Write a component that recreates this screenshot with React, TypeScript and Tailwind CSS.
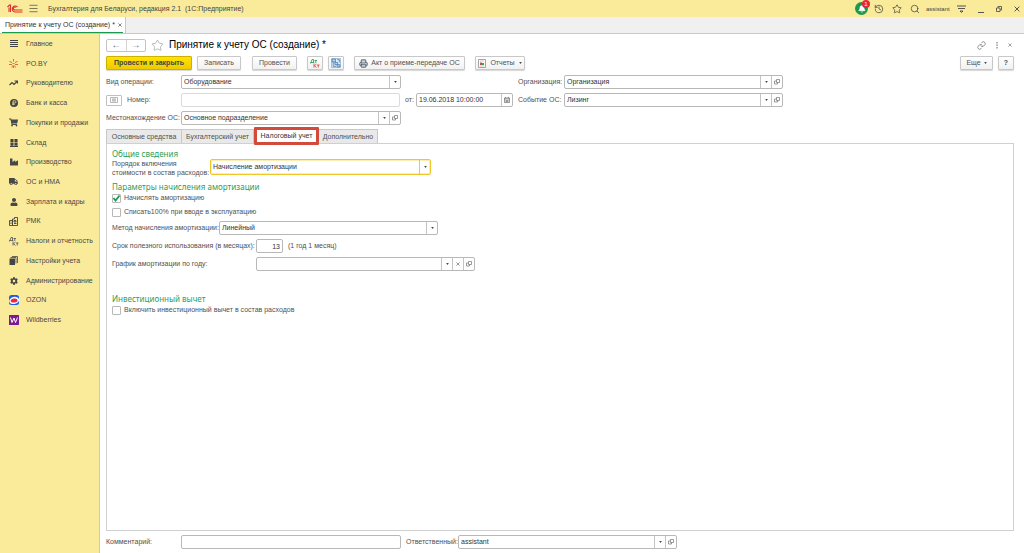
import { useState } from 'react'
import type { ReactNode } from 'react'
import { FaCog, FaIndustry, FaShoppingCart, FaTruck, FaUser } from 'react-icons/fa'
import { Bell, History, Link, Menu, Printer, Search, Star } from 'lucide-react'

const CELL =
  'flex w-[11px] shrink-0 items-center justify-center border-l border-[#c4c4c4] text-[#555]'
const BUTTON =
  'flex h-[14px] items-center justify-center rounded-[1px] border border-[#c8c8c8] bg-linear-to-b from-white to-[#f1f1f1] text-[#505050] shadow-[0_1px_1px_#d8d8d8]'

function Caret() {
  return (
    <svg viewBox="0 0 4 3" className="h-[2px] w-[3px]" aria-hidden="true">
      <path d="M0 0h4L2 3z" fill="#444" />
    </svg>
  )
}

function OpenIcon() {
  return (
    <svg viewBox="0 0 12 12" className="size-[6px]" fill="none" stroke="#666" strokeWidth="1.3" aria-hidden="true">
      <path d="M5 1h6v6H5zM5 4H1v6h6V7" />
    </svg>
  )
}

function CrossIcon({ className }: { className: string }) {
  return (
    <svg viewBox="0 0 10 10" className={className} fill="none" stroke="currentColor" strokeWidth="1.5" aria-hidden="true">
      <path d="M1 1l8 8M9 1L1 9" />
    </svg>
  )
}

function LogoIcon() {
  return (
    <svg viewBox="0 0 32 18" className="h-[9px] w-[16px]" fill="none" stroke="#d9302c" strokeWidth="2.2" aria-hidden="true">
      <path d="M1 6l4-4h2v14M4 7v9" />
      <path d="M21 6a6 6 0 1 0-5 10h15" />
      <path d="M18 7a3 3 0 1 0-2 5h15" />
    </svg>
  )
}

function MainIcon() {
  return (
    <svg viewBox="0 0 16 16" className="size-[8px]" stroke="#444" strokeWidth="2" aria-hidden="true">
      <path d="M0 1h16M0 5h16M0 9h16M0 13h16" />
    </svg>
  )
}

function SparkIcon() {
  return (
    <svg viewBox="0 0 18 18" className="size-[9px]" fill="none" stroke="#d9502c" strokeWidth="1.7" aria-hidden="true">
      <path d="M9 0v5M9 13v5M1 5l5 2M17 5l-5 2M0 11h6M18 11h-6M6 17l1-4M13 17l-2-4M7 8l2 2 2-2" />
    </svg>
  )
}

function TrendIcon() {
  return (
    <svg viewBox="0 0 18 12" className="h-[6px] w-[9px]" fill="none" stroke="#444" strokeWidth="2.4" aria-hidden="true">
      <path d="M1 10l5-5 4 4 6-6M11 2h6v5" />
    </svg>
  )
}

function CoinIcon() {
  return (
    <svg viewBox="0 0 18 18" className="size-[8px]" aria-hidden="true">
      <circle cx="9" cy="9" r="9" fill="#444" />
      <path d="M7 14V4h4a2 2 0 0 1 0 5H5M5 12h6" fill="none" stroke="#faeb9b" strokeWidth="1.6" />
    </svg>
  )
}

function GridIcon() {
  return (
    <svg viewBox="0 0 18 18" className="size-[8px]" fill="#444" aria-hidden="true">
      <path d="M1 0h7v7H1zM10 0h7v7h-7zM1 8h7v7H1zM10 8h7v7h-7zM0 16h18v2H0z" />
    </svg>
  )
}

function RegisterIcon() {
  return (
    <svg viewBox="0 0 18 18" className="size-[9px]" fill="none" stroke="#444" strokeWidth="1.8" aria-hidden="true">
      <path d="M1 7h6v10H1zM7 4h4V1h6v16H7zM3 10h2M3 13h2M10 7h4v3h-4zM10 13h5" />
    </svg>
  )
}

function BooksIcon() {
  return (
    <svg viewBox="0 0 18 18" className="size-[9px]" fill="#444" aria-hidden="true">
      <path d="M1 5h11v13H1z" />
      <path d="M3 3h11v12M6 1h11v13" fill="none" stroke="#444" strokeWidth="1.6" />
    </svg>
  )
}

function DebitCreditIcon({ color, accent }: { color: string; accent: string }) {
  return (
    <svg viewBox="0 0 20 18" className="h-[9px] w-[10px]" fill="none" strokeWidth="1.7" aria-hidden="true">
      <path d="M1 9V7h7v2M2 7l2-6h3v6M9 3h5M11.5 3v5" stroke={color} />
      <path d="M8 10v7M13 10l-4 3.5L13 17M14 12h5M16.5 12v5" stroke={accent} />
    </svg>
  )
}

function StructureIcon() {
  return (
    <svg viewBox="0 0 18 18" className="size-[10px]" fill="#bcd7ee" stroke="#4a80b4" strokeWidth="1.5" aria-hidden="true">
      <path d="M1 1h16v16H1z" fill="#e3eff9" stroke="#8fb4d6" />
      <path d="M2 2h6v5H2zM7 8h5v4H7zM11 12h5v4h-5z" />
      <path d="M4 7v8h5M11 3h4v5" fill="none" />
    </svg>
  )
}

function ReportIcon() {
  return (
    <svg viewBox="0 0 16 18" className="h-[9px] w-[8px]" fill="none" aria-hidden="true">
      <path d="M1 1h14v16H1z" fill="#fff" stroke="#888" strokeWidth="1.5" />
      <path d="M4 4h8M4 14h8" stroke="#aaa" strokeWidth="1.3" />
      <path d="M4 12V7h4v5z" fill="#d14b3f" />
      <path d="M8 12V8h4v4z" fill="#3f9a58" />
    </svg>
  )
}

function OzonIcon() {
  return (
    <svg viewBox="0 0 20 20" className="size-[10px]" aria-hidden="true">
      <rect width="20" height="20" rx="5" fill="#1a5fe8" />
      <ellipse cx="10" cy="11" rx="10" ry="7" fill="#fff" transform="rotate(-15 10 10)" />
      <ellipse cx="10" cy="11" rx="7" ry="4" fill="#ee2744" transform="rotate(-10 10 10)" />
    </svg>
  )
}

function WildberriesIcon() {
  return (
    <svg viewBox="0 0 20 20" className="size-[10px]" aria-hidden="true">
      <rect width="20" height="20" rx="1" fill="#7d1a91" />
      <path d="M3 5l3 10 4-9 3 9 4-10" fill="none" stroke="#fff" strokeWidth="2" />
    </svg>
  )
}

const SECTIONS: { label: string; icon: ReactNode }[] = [
  { label: 'Главное', icon: <MainIcon /> },
  { label: 'PO.BY', icon: <SparkIcon /> },
  { label: 'Руководителю', icon: <TrendIcon /> },
  { label: 'Банк и касса', icon: <CoinIcon /> },
  { label: 'Покупки и продажи', icon: <FaShoppingCart size={9} /> },
  { label: 'Склад', icon: <GridIcon /> },
  { label: 'Производство', icon: <FaIndustry size={8} /> },
  { label: 'ОС и НМА', icon: <FaTruck size={9} /> },
  { label: 'Зарплата и кадры', icon: <FaUser size={8} /> },
  { label: 'РМК', icon: <RegisterIcon /> },
  { label: 'Налоги и отчетность', icon: <DebitCreditIcon color="#555" accent="#555" /> },
  { label: 'Настройки учета', icon: <BooksIcon /> },
  { label: 'Администрирование', icon: <FaCog size={8} /> },
  { label: 'OZON', icon: <OzonIcon /> },
  { label: 'Wildberries', icon: <WildberriesIcon /> },
]

interface ComboProps {
  id: string
  value: string
  className: string
  clearable?: boolean
  openable?: boolean
  focused?: boolean
}

function Combo({ id, value, className, clearable, openable, focused }: ComboProps) {
  const frame = focused
    ? 'h-[16px] border-[#f0c629] ring-1 ring-inset ring-[#fbeeb0]'
    : 'h-[14px] border-[#b8b8b8]'
  return (
    <div className={`flex rounded-[2px] border bg-white ${frame} ${className}`}>
      <div className="relative flex min-w-0 flex-1">
        <select
          id={id}
          defaultValue={value}
          className="w-full appearance-none bg-transparent px-[2px] text-[#333] outline-none"
        >
          <option>{value}</option>
        </select>
        <span className={`${CELL} pointer-events-none absolute inset-y-0 right-0`}>
          <Caret />
        </span>
      </div>
      {clearable && (
        <button aria-label="Очистить" className={CELL}>
          <CrossIcon className="size-[4px]" />
        </button>
      )}
      {openable && (
        <button aria-label="Открыть" className={CELL}>
          <OpenIcon />
        </button>
      )}
    </div>
  )
}

function Check({ id, label, initial = false }: { id: string; label: string; initial?: boolean }) {
  const [checked, setChecked] = useState(initial)
  return (
    <div className="flex h-[14px] items-center gap-[3px]">
      <span className="relative flex size-[9px]">
        <input
          id={id}
          type="checkbox"
          checked={checked}
          onChange={(e) => setChecked(e.target.checked)}
          className="size-[9px] appearance-none rounded-[1px] border border-[#b8b8b8] bg-white"
        />
        {checked && (
          <svg viewBox="0 0 18 18" className="pointer-events-none absolute inset-0 size-[9px]" fill="none" stroke="#1b9a4b" strokeWidth="3.5" aria-hidden="true">
            <path d="M3 8l4 5L15 3" />
          </svg>
        )}
      </span>
      <label htmlFor={id}>{label}</label>
    </div>
  )
}

function TitleBar() {
  return (
    <header className="flex h-[17px] items-center bg-[#faeb9b] pr-[4px] pl-[7px] text-[#444]">
      <LogoIcon />
      <button aria-label="Меню" className="ml-[5px]">
        <Menu size={11} strokeWidth={1.5} />
      </button>
      <span className="ml-[9px] whitespace-pre">Бухгалтерия для Беларуси, редакция 2.1  (1С:Предприятие)</span>
      <div className="ml-auto flex items-center">
        <button aria-label="Уведомления" className="relative flex size-[13px] items-center justify-center rounded-full bg-[#1b9a4b] text-white">
          <Bell size={8} fill="white" />
          <span className="absolute -top-[2px] -right-[2px] flex size-[8px] items-center justify-center rounded-full bg-[#e8263c] text-[6px] leading-none">
            1
          </span>
        </button>
        <button aria-label="История" className="ml-[6px]"><History size={10} strokeWidth={1.8} /></button>
        <button aria-label="Избранное" className="ml-[8px]"><Star size={10} strokeWidth={1.8} /></button>
        <button aria-label="Поиск" className="ml-[8px]"><Search size={10} strokeWidth={1.8} /></button>
        <span className="ml-[6px] w-[24px] text-[6px]">assistant</span>
        <button aria-label="Настройки" className="ml-[7px]">
          <svg viewBox="0 0 18 16" className="h-[8px] w-[9px]" fill="none" stroke="#444" strokeWidth="1.8" aria-hidden="true">
            <path d="M0 2h18M2 7h14M6 12h6l-3 3z" />
          </svg>
        </button>
        <button aria-label="Свернуть" className="ml-[12px] flex h-[8px] w-[6px] items-end">
          <span className="h-px w-full bg-[#555]" />
        </button>
        <button aria-label="Восстановить" className="ml-[12px]">
          <svg viewBox="0 0 12 12" className="size-[6px]" fill="none" stroke="#444" strokeWidth="1.6" aria-hidden="true">
            <path d="M1 4h7v7H1zM4 4V1h7v7H8" />
          </svg>
        </button>
        <button aria-label="Закрыть окно" className="ml-[12px]"><CrossIcon className="size-[6px]" /></button>
      </div>
    </header>
  )
}

function Sidebar() {
  return (
    <nav className="w-[100px] shrink-0 border-r border-[#d8cd8c] bg-[#faeb9b]">
      <ul className="grid h-[296px] auto-rows-fr">
        {SECTIONS.map(({ label, icon }) => (
          <li key={label}>
            <a href="#" className="flex h-full items-center text-[#484848]">
              <span className="ml-[8px] flex w-[11px] justify-center">{icon}</span>
              <span className="ml-[7px] whitespace-nowrap">{label}</span>
            </a>
          </li>
        ))}
      </ul>
    </nav>
  )
}

function Toolbar() {
  return (
    <div className="mt-[4px] flex">
      <button className="h-[14px] w-[86px] rounded-[1px] border border-[#cdb000] bg-linear-to-b from-[#ffe300] to-[#efca00] font-bold text-[#444] shadow-[0_1px_1px_#d8d8d8]">
        Провести и закрыть
      </button>
      <button className={`${BUTTON} ml-[5px] w-[44px]`}>Записать</button>
      <button className={`${BUTTON} ml-[11px] w-[45px]`}>Провести</button>
      <button aria-label="Дт/Кт" className={`${BUTTON} ml-[10px] w-[16px]`}>
        <DebitCreditIcon color="#2e9e55" accent="#d9403c" />
      </button>
      <button aria-label="Структура подчиненности" className={`${BUTTON} ml-[5px] w-[16px]`}>
        <StructureIcon />
      </button>
      <button className={`${BUTTON} ml-[10px] w-[111px] gap-[3px]`}>
        <Printer size={9} fill="#c5ccd6" stroke="#3f4a57" />
        Акт о приеме-передаче ОС
      </button>
      <button className={`${BUTTON} ml-[10px] w-[50px] gap-[4px]`}>
        <ReportIcon />
        Отчеты
        <Caret />
      </button>
      <button className={`${BUTTON} ml-auto w-[33px] gap-[3px]`}>
        Еще
        <Caret />
      </button>
      <button aria-label="Справка" className={`${BUTTON} ml-[5px] w-[16px] font-bold`}>?</button>
    </div>
  )
}

function DocumentFields() {
  return (
    <div className="mt-[5px] flex flex-col gap-[4px]">
      <div className="flex items-center">
        <label htmlFor="operation" className="w-[75px]">Вид операции:</label>
        <Combo id="operation" value="Оборудование" className="w-[220px]" />
        <label htmlFor="organization" className="ml-[117px] w-[46px]">Организация:</label>
        <Combo id="organization" value="Организация" className="w-[219px]" openable />
      </div>
      <div className="flex items-center">
        <button aria-label="Список номеров" className="flex h-[11px] w-[16px] items-center justify-center rounded-[1px] border border-[#c0c0c0]">
          <svg viewBox="0 0 16 12" className="h-[6px] w-[8px]" fill="none" stroke="#888" strokeWidth="1.2" aria-hidden="true">
            <path d="M1 1h14v10H1zM4 4h8M4 6h8M4 8h8" />
          </svg>
        </button>
        <label htmlFor="number" className="ml-[5px] w-[54px]">Номер:</label>
        <input id="number" readOnly className="h-[14px] w-[219px] rounded-[2px] border border-[#dadada] px-[2px]" />
        <label htmlFor="date" className="ml-[5px] w-[11px]">от:</label>
        <div className="flex h-[14px] w-[97px] rounded-[2px] border border-[#b8b8b8]">
          <input id="date" defaultValue="19.06.2018 10:00:00" className="min-w-0 flex-1 px-[2px] text-[#333] outline-none" />
          <button aria-label="Календарь" className={CELL}>
            <svg viewBox="0 0 12 12" className="size-[6px]" fill="none" stroke="#555" strokeWidth="1.2" aria-hidden="true">
              <path d="M1 2h10v9H1zM1 4h10M3 7h6M3 9h6M3 0v2M9 0v2" />
            </svg>
          </button>
        </div>
        <label htmlFor="event" className="ml-[5px] w-[46px]">Событие ОС:</label>
        <Combo id="event" value="Лизинг" className="w-[219px]" openable />
      </div>
      <div className="flex items-center">
        <label htmlFor="location" className="w-[75px] whitespace-nowrap">Местонахождение ОС:</label>
        <Combo id="location" value="Основное подразделение" className="w-[220px]" openable />
      </div>
    </div>
  )
}

function Tabs() {
  const tab = 'h-[15px] border-t border-r border-[#c8c8c8] bg-[#e9e9e9]'
  return (
    <div role="tablist" className="mt-[4px] -mb-px flex">
      <button role="tab" className={`${tab} w-[76px] border-l`}>Основные средства</button>
      <button role="tab" className={`${tab} w-[72px]`}>Бухгалтерский учет</button>
      <button role="tab" aria-selected="true" className="relative z-10 -mt-[2px] -mb-px h-[18px] w-[65px] rounded-[1px] border-3 border-[#d24a3c] bg-white whitespace-nowrap text-[#333]">
        Налоговый учет
      </button>
      <button role="tab" className={`${tab} w-[59px]`}>Дополнительно</button>
    </div>
  )
}

function TaxPanel() {
  const heading = "font-['Noto_Sans',sans-serif] text-[8px] leading-[9px] text-[#2e9e55]"
  return (
    <section className="flex-1 border border-[#d0d0d0] px-[5px] pt-[5px]">
      <h2 className={heading}>Общие сведения</h2>
      <div className="mt-px flex items-start">
        <label htmlFor="expense-order" className="w-[98px] leading-[9px] whitespace-nowrap">
          Порядок включения
          <br />
          стоимости в состав расходов:
        </label>
        <Combo id="expense-order" value="Начисление амортизации" className="w-[221px]" focused />
      </div>
      <h2 className={`${heading} mt-[5px]`}>Параметры начисления амортизации</h2>
      <Check id="accrue" label="Начислять амортизацию" initial />
      <Check id="write-off" label="Списать100% при вводе в эксплуатацию" />
      <div className="mt-[2px] flex items-center">
        <label htmlFor="method" className="w-[107px]">Метод начисления амортизации:</label>
        <Combo id="method" value="Линейный" className="w-[219px]" />
      </div>
      <div className="mt-[4px] flex items-center">
        <label htmlFor="term" className="w-[144px]">Срок полезного использования (в месяцах):</label>
        <input id="term" defaultValue="13" className="h-[14px] w-[27px] rounded-[2px] border border-[#b8b8b8] px-[2px] text-right text-[#333]" />
        <span className="ml-[5px]">(1 год 1 месяц)</span>
      </div>
      <div className="mt-[4px] flex items-center">
        <label htmlFor="schedule" className="w-[144px]">График амортизации по году:</label>
        <Combo id="schedule" value="" className="w-[219px]" clearable openable />
      </div>
      <h2 className={`${heading} mt-[23px]`}>Инвестиционный вычет</h2>
      <Check id="deduction" label="Включить инвестиционный вычет в состав расходов" />
    </section>
  )
}

export default function App() {
  return (
    <div className="flex min-h-screen flex-col bg-white font-['Liberation_Sans',Arial,sans-serif] text-[7px] leading-[10px] text-[#505050]">
      <TitleBar />
      <div className="flex h-[17px] border-b border-[#c8c8c8] bg-[#f0f0f0]">
        <div className="flex w-[126px] items-center border-r border-[#c8c8c8] bg-white px-[2px]">
          <div className="flex h-[15px] flex-1 items-center border-b border-[#1b9a4b] pl-[3px] text-[#333]">
            <a href="#" className="whitespace-nowrap">Принятие к учету ОС (создание) *</a>
            <button aria-label="Закрыть вкладку" className="ml-[3px]"><CrossIcon className="size-[4px]" /></button>
          </div>
        </div>
      </div>
      <div className="flex flex-1">
        <Sidebar />
        <main className="flex min-w-0 flex-1 flex-col pt-[4px] pr-[10px] pb-[4px] pl-[6px]">
          <div className="flex items-center">
            <div className="flex h-[13px] w-[40px] rounded-[2px] border border-[#c4c4c4] text-[10px] text-[#777]">
              <button aria-label="Назад" className="flex-1">←</button>
              <button aria-label="Вперед" className="flex-1 border-l border-[#d4d4d4]">→</button>
            </div>
            <button aria-label="В избранное" className="ml-[5px] text-[#aaa]"><Star size={13} strokeWidth={1.5} /></button>
            <h1 className="ml-[5px] text-[10px] leading-[14px] text-black">Принятие к учету ОС (создание) *</h1>
            <div className="ml-auto flex items-center gap-[10px] text-[#666]">
              <button aria-label="Ссылка"><Link size={9} strokeWidth={1.8} /></button>
              <button aria-label="Действия" className="-mx-[1px]">
                <svg viewBox="0 0 8 14" className="h-[7px] w-[4px]" fill="#666" aria-hidden="true">
                  <path d="M3 0h2v3H3zM3 5h2v3H3zM3 10h2v3H3z" />
                </svg>
              </button>
              <button aria-label="Закрыть" className="mr-[2px]"><CrossIcon className="size-[4px]" /></button>
            </div>
          </div>
          <Toolbar />
          <DocumentFields />
          <Tabs />
          <TaxPanel />
          <div className="mt-[4px] flex items-center">
            <label htmlFor="comment" className="w-[75px]">Комментарий:</label>
            <input id="comment" className="h-[14px] w-[220px] rounded-[2px] border border-[#b8b8b8] px-[2px]" />
            <label htmlFor="responsible" className="ml-[5px] w-[52px]">Ответственный:</label>
            <Combo id="responsible" value="assistant" className="w-[219px]" openable />
          </div>
        </main>
      </div>
    </div>
  )
}
